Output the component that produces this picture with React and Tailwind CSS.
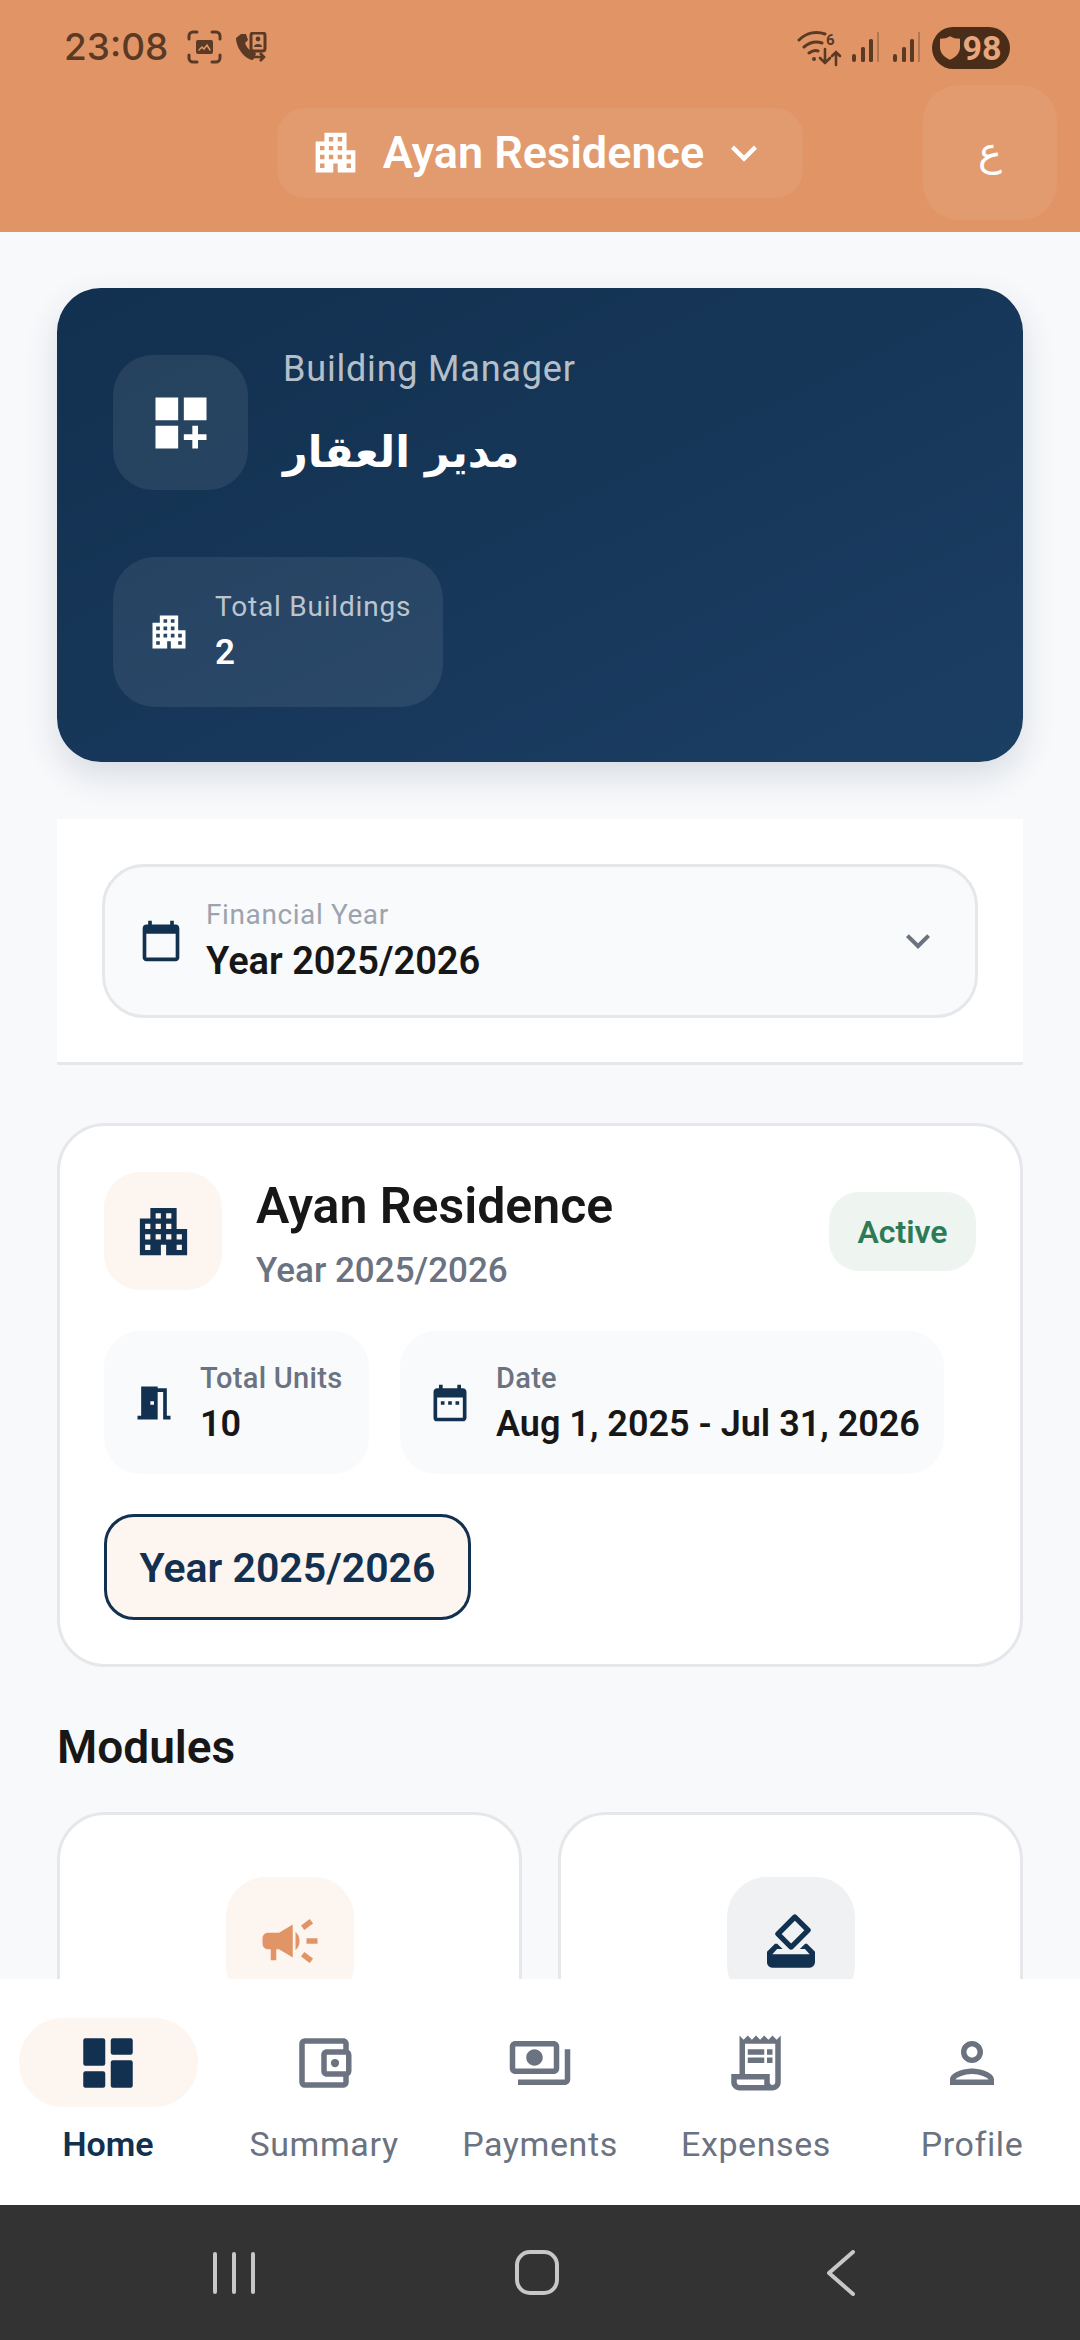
import React from "react";
import {
  MdApartment,
  MdCalendarToday,
  MdCampaign,
  MdDashboardCustomize,
  MdDateRange,
  MdHowToVote,
  MdKeyboardArrowDown,
  MdMeetingRoom,
  MdOutlineAccountBalanceWallet,
  MdOutlinePayments,
  MdOutlinePerson,
  MdOutlineReceiptLong,
} from "react-icons/md";

const ScanIcon = () => (
  <svg width="35" height="34" viewBox="0 0 35 34" fill="none" stroke="#5a3a25" strokeWidth="3" strokeLinecap="round">
    <path d="M2 9V6a4 4 0 0 1 4-4h4M25 2h4a4 4 0 0 1 4 4v3M33 25v3a4 4 0 0 1-4 4h-4M10 32H6a4 4 0 0 1-4-4v-3" />
    <rect x="9" y="10" width="17" height="14" rx="2" fill="#5a3a25" stroke="none" />
    <path d="M12 20l3-3 2 2 3-4 3 5" stroke="#e19566" strokeWidth="1.5" />
  </svg>
);

const CallIcon = () => (
  <svg width="32" height="30" viewBox="0 0 32 30" fill="none">
    <path d="M6 2l5 0 2 6-3 3c1 3 3 6 6 8l3-1 2 4-3 6C9 27 1 15 1 6z" fill="#5a3a25" />
    <rect x="16" y="1" width="14" height="18" rx="2.5" stroke="#5a3a25" strokeWidth="3" />
    <circle cx="23" cy="7" r="2.4" fill="#5a3a25" />
    <path d="M19 15a4 3 0 0 1 8 0z" fill="#5a3a25" />
    <path d="M18 25h11M25 21l4 4-4 4" stroke="#5a3a25" strokeWidth="2.6" />
  </svg>
);

const WifiIcon = () => (
  <svg width="46" height="38" viewBox="0 0 46 38" fill="none" stroke="#5a3a25" strokeWidth="3" strokeLinecap="round">
    <path d="M2 11C10 3 20 2 28 5M7 18c6-5 12-6 18-4M12 24c3-2 6-3 9-2" />
    <circle cx="17" cy="30" r="2" fill="#5a3a25" stroke="none" />
    <text x="29" y="16" fontSize="15" fontWeight="700" fill="#5a3a25" stroke="none" fontFamily="Roboto">6</text>
    <path d="M28 20v14M23 29l5 5 5-5M39 36V23M35 27l4-4 4 4" strokeWidth="2.6" />
  </svg>
);

const SignalIcon = () => (
  <svg width="27" height="32" viewBox="0 0 27 32" fill="#5a3a25">
    <rect x="0" y="22" width="4" height="8" rx="2" />
    <rect x="9" y="15" width="4" height="15" rx="1.5" />
    <rect x="17" y="7" width="4" height="23" rx="1.5" />
    <rect x="25" y="0" width="2" height="30" opacity="0.35" />
  </svg>
);

const ShieldIcon = () => (
  <svg width="20" height="24" viewBox="0 0 24 28" fill="#e19566">
    <path d="M12 0c3 2 7 3 12 3v10c0 7-5 12-12 15C5 25 0 20 0 13V3c5 0 9-1 12-3z" />
  </svg>
);

const HomeIcon = () => (
  <svg width="66" height="66" viewBox="0 0 24 24" fill="currentColor">
    <rect x="3" y="3" width="8" height="10" rx="0.8" />
    <rect x="3" y="15" width="8" height="6" rx="0.8" />
    <rect x="13" y="3" width="8" height="6" rx="0.8" />
    <rect x="13" y="11" width="8" height="10" rx="0.8" />
  </svg>
);

const navItems = [
  { label: "Summary", Icon: MdOutlineAccountBalanceWallet },
  { label: "Payments", Icon: MdOutlinePayments },
  { label: "Expenses", Icon: MdOutlineReceiptLong },
  { label: "Profile", Icon: MdOutlinePerson },
];

const App = () => {
  return (
    <div className="w-[1080px] h-[2340px] flex flex-col overflow-hidden bg-[#f8f9fb] font-['Roboto','DejaVu_Sans',sans-serif]">
      {/* Header */}
      <div className="h-[232px] shrink-0 bg-[#e19566]">
        <div className="h-[85px] flex items-start justify-between pl-[64px] pr-[70px] pt-[27px]">
          <div className="flex items-center h-[40px]">
            <span className="font-['Inter',sans-serif] text-[37px] leading-[40px] font-medium text-[#5a3a25]">23:08</span>
            <span className="ml-[19px] flex"><ScanIcon /></span>
            <span className="ml-[13px] flex"><CallIcon /></span>
          </div>
          <div className="flex items-center h-[42px]">
            <WifiIcon />
            <span className="ml-[9px] flex"><SignalIcon /></span>
            <span className="ml-[14px] flex"><SignalIcon /></span>
            <div className="ml-[12px] w-[78px] h-[42px] rounded-full bg-[#4a2d18] flex items-center justify-center gap-[2px]">
              <ShieldIcon />
              <span className="text-[34px] leading-none font-bold text-[#e8a67c]">98</span>
            </div>
          </div>
        </div>
        <div className="grid grid-cols-[1fr_auto_1fr] items-center h-[135px]">
          <div />
          <div className="h-[90px] rounded-[28px] bg-white/[0.06] flex items-center pl-[32px] pr-[33px] text-white">
            <MdApartment size={53} />
            <span className="ml-[21px] text-[45px] leading-none font-semibold">Ayan Residence</span>
            <MdKeyboardArrowDown size={52} className="ml-[14px]" />
          </div>
          <div className="flex justify-end pr-[23px]">
            <div className="w-[134px] h-[135px] rounded-[36px] bg-white/[0.06] flex items-center justify-center pb-[4px] text-white text-[40px] font-['DejaVu_Sans',sans-serif]">
              ع
            </div>
          </div>
        </div>
      </div>

      {/* Scrollable content */}
      <div className="flex-1 min-h-0 overflow-hidden px-[57px] pt-[56px]">
        {/* Manager card */}
        <div className="h-[474px] rounded-[44px] bg-linear-to-br from-[#12304f] to-[#1b3e63] px-[56px] pt-[56px] shadow-[0_14px_34px_rgba(18,48,79,0.14)]">
          <div className="h-[146px] flex items-start">
            <div className="mt-[11px] w-[135px] h-[135px] rounded-[40px] bg-white/[0.08] flex items-center justify-center text-white">
              <MdDashboardCustomize size={68} />
            </div>
            <div className="ml-[35px] mt-[5px]">
              <div className="text-[36px] leading-[40px] tracking-[0.8px] text-white/70">Building Manager</div>
              <div className="mt-[28px] text-[43px] leading-[70px] font-bold text-white font-['DejaVu_Sans',sans-serif]">
                مدير العقار
              </div>
            </div>
          </div>
          <div className="mt-[67px] w-[330px] h-[150px] rounded-[42px] bg-white/[0.08] flex items-center pl-[34px] text-white">
            <MdApartment size={44} />
            <div className="ml-[24px]">
              <div className="text-[28px] leading-[34px] tracking-[0.8px] text-white/70">Total Buildings</div>
              <div className="mt-[8px] text-[35px] leading-[42px] font-semibold">2</div>
            </div>
          </div>
        </div>

        {/* Financial year */}
        <div className="mt-[57px] h-[246px] bg-white border-b-[3px] border-[#e5e7eb] pt-[45px] px-[45px]">
          <div className="h-[154px] rounded-[42px] border-[3px] border-[#e5e7eb] bg-[#f9fafb] flex items-center pl-[34px] pr-[33px]">
            <MdCalendarToday size={44} className="text-[#12304f]" />
            <div className="ml-[23px] flex-1">
              <div className="text-[28px] leading-[32px] tracking-[0.6px] text-[#9ca3af]">Financial Year</div>
              <div className="mt-[8px] text-[38px] leading-[44px] font-semibold text-[#171717]">Year 2025/2026</div>
            </div>
            <MdKeyboardArrowDown size={48} className="text-[#6b7280]" />
          </div>
        </div>

        {/* Property card */}
        <div className="mt-[58px] h-[544px] bg-white rounded-[48px] border-[3px] border-[#e5e7eb] px-[44px] pt-[46px]">
          <div className="flex items-start h-[118px]">
            <div className="w-[118px] h-[118px] rounded-[36px] bg-[#fdf5f0] flex items-center justify-center text-[#12304f]">
              <MdApartment size={63} />
            </div>
            <div className="ml-[34px] pt-[2px] flex-1">
              <div className="text-[50px] leading-[64px] font-semibold text-[#171717]">Ayan Residence</div>
              <div className="mt-[7px] text-[35px] leading-[52px] font-medium text-[#6b7280]">Year 2025/2026</div>
            </div>
            <div className="mt-[20px] w-[147px] h-[79px] rounded-[30px] bg-[#eef4f0] flex items-center justify-center text-[#2d7a56] text-[32px] font-semibold">
              Active
            </div>
          </div>
          <div className="mt-[41px] flex gap-[31px]">
            <div className="w-[265px] h-[143px] rounded-[36px] bg-[#f9fafb] flex items-center pl-[28px]">
              <MdMeetingRoom size={44} className="text-[#12304f]" />
              <div className="ml-[24px]">
                <div className="text-[29px] leading-[34px] tracking-[0.3px] font-medium text-[#6b7280]">Total Units</div>
                <div className="mt-[8px] text-[36px] leading-[42px] font-semibold text-[#171717]">10</div>
              </div>
            </div>
            <div className="w-[544px] h-[143px] rounded-[36px] bg-[#f9fafb] flex items-center pl-[28px]">
              <MdDateRange size={44} className="text-[#12304f]" />
              <div className="ml-[24px]">
                <div className="text-[29px] leading-[34px] tracking-[0.3px] font-medium text-[#6b7280]">Date</div>
                <div className="mt-[8px] text-[36px] leading-[42px] font-semibold text-[#171717] whitespace-nowrap">Aug 1, 2025 - Jul 31, 2026</div>
              </div>
            </div>
          </div>
          <div className="mt-[40px] w-[367px] h-[106px] rounded-[30px] border-[3px] border-[#12304f] bg-[#fdf5f0] flex items-center justify-center pt-[3px] text-[41px] font-semibold text-[#12304f]">
            Year 2025/2026
          </div>
        </div>

        {/* Modules */}
        <div className="mt-[52px] text-[46px] leading-[56px] font-semibold text-[#171717]">Modules</div>
        <div className="mt-[37px] grid grid-cols-2 gap-[36px]">
          <div className="h-[300px] bg-white rounded-[48px] border-[3px] border-[#e5e7eb] pt-[62px] flex justify-center">
            <div className="w-[128px] h-[128px] rounded-[40px] bg-[#fdf5f0] flex items-center justify-center text-[#e19566]">
              <MdCampaign size={66} />
            </div>
          </div>
          <div className="h-[300px] bg-white rounded-[48px] border-[3px] border-[#e5e7eb] pt-[62px] flex justify-center">
            <div className="w-[128px] h-[128px] rounded-[40px] bg-[#eff1f3] flex items-center justify-center text-[#12304f]">
              <MdHowToVote size={64} />
            </div>
          </div>
        </div>
      </div>

      {/* Bottom navigation */}
      <div className="h-[226px] shrink-0 bg-white grid grid-cols-5 pt-[39px]">
        <div className="flex flex-col items-center">
          <div className="w-[179px] h-[89px] rounded-[44px] bg-[#fdf5f0] flex items-center justify-center text-[#12304f]">
            <HomeIcon />
          </div>
          <span className="mt-[17px] text-[34px] leading-[40px] font-semibold text-[#12304f]">Home</span>
        </div>
        {navItems.map(({ label, Icon }) => (
          <div key={label} className="flex flex-col items-center">
            <div className="h-[89px] flex items-center justify-center text-[#6b7280]">
              <Icon size={66} />
            </div>
            <span className="mt-[17px] text-[34px] leading-[40px] tracking-[0.6px] text-[#6b7280]">{label}</span>
          </div>
        ))}
      </div>

      {/* System navigation */}
      <div className="h-[135px] shrink-0 bg-[#333333] grid grid-cols-3 pl-[82px] pr-[87px] items-center">
        <div className="flex justify-center gap-[15px]">
          <span className="w-[4px] h-[42px] rounded-full bg-[#c8c8c8]" />
          <span className="w-[4px] h-[42px] rounded-full bg-[#c8c8c8]" />
          <span className="w-[4px] h-[42px] rounded-full bg-[#c8c8c8]" />
        </div>
        <div className="flex justify-center">
          <span className="w-[44px] h-[45px] rounded-[15px] border-[4px] border-[#c8c8c8]" />
        </div>
        <div className="flex justify-center">
          <svg width="30" height="46" viewBox="0 0 30 46" fill="none" stroke="#c8c8c8" strokeWidth="4" strokeLinecap="round" strokeLinejoin="round">
            <path d="M27 2L3 23l24 21" />
          </svg>
        </div>
      </div>
    </div>
  );
};

export default App;
